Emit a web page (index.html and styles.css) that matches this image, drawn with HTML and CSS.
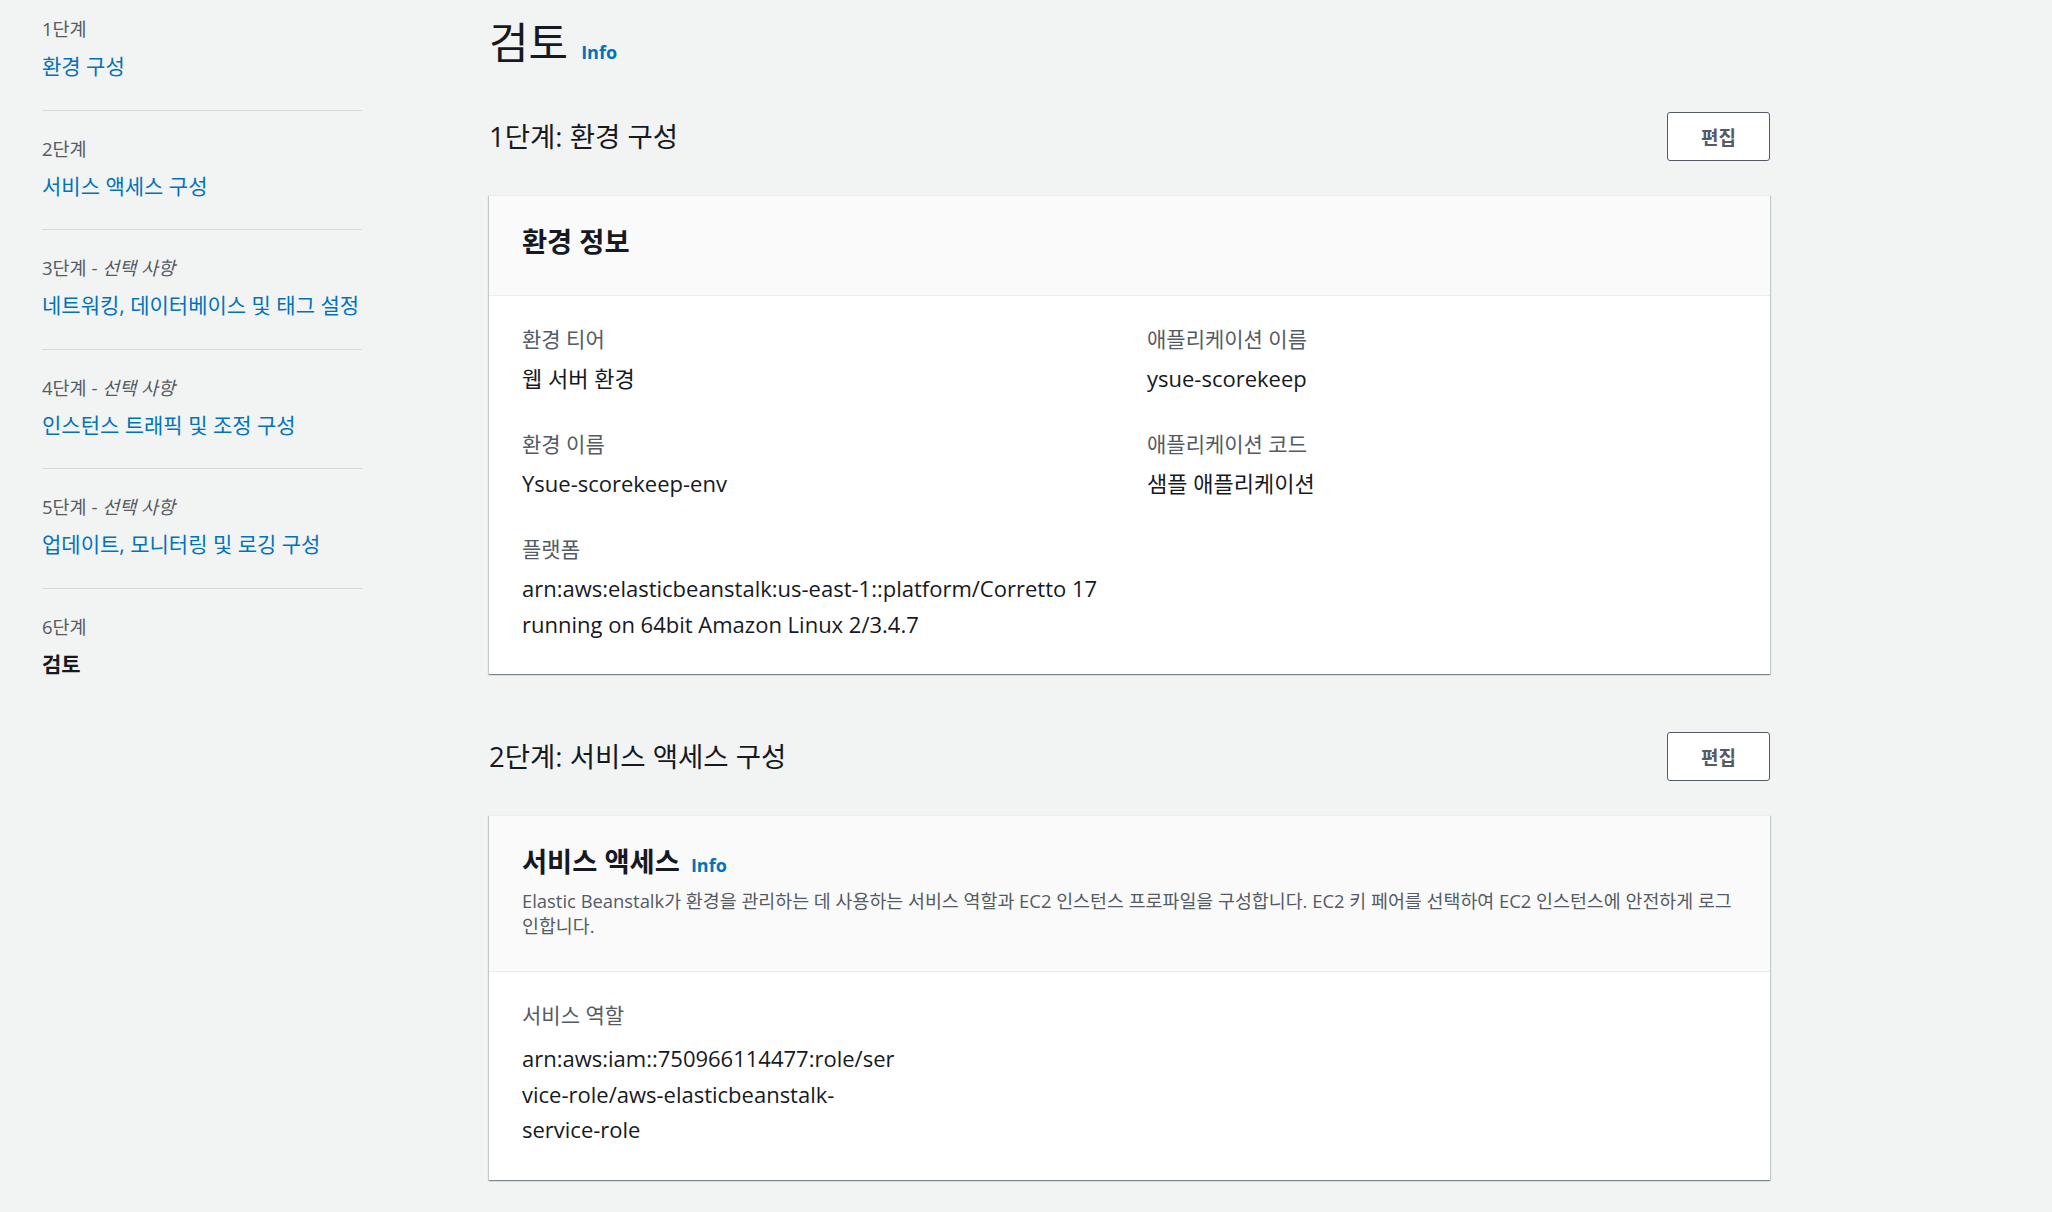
FILE: index.html
```html
<!DOCTYPE html>
<html lang="ko">
<head>
    <meta charset="UTF-8">
    <meta name="viewport" content="width=device-width, initial-scale=1.0">
    <title>검토 - Elastic Beanstalk</title>
    <link rel="stylesheet" href="styles.css">
</head>
<body>
    <div class="layout">
        <!-- Wizard steps -->
        <nav class="steps">
            <ol>
                <li>
                    <span class="step-num">1단계</span>
                    <a href="#" class="step-link">환경 구성</a>
                </li>
                <li>
                    <span class="step-num">2단계</span>
                    <a href="#" class="step-link">서비스 액세스 구성</a>
                </li>
                <li>
                    <span class="step-num">3단계 - <i>선택 사항</i></span>
                    <a href="#" class="step-link">네트워킹, 데이터베이스 및 태그 설정</a>
                </li>
                <li>
                    <span class="step-num">4단계 - <i>선택 사항</i></span>
                    <a href="#" class="step-link">인스턴스 트래픽 및 조정 구성</a>
                </li>
                <li>
                    <span class="step-num">5단계 - <i>선택 사항</i></span>
                    <a href="#" class="step-link">업데이트, 모니터링 및 로깅 구성</a>
                </li>
                <li>
                    <span class="step-num">6단계</span>
                    <span class="step-current">검토</span>
                </li>
            </ol>
        </nav>

        <!-- Review -->
        <main class="main-content">
            <div class="page-title">
                <h1>검토</h1>
                <a href="#" class="info-link">Info</a>
            </div>

            <section class="review-section">
                <div class="section-header">
                    <h2>1단계: 환경 구성</h2>
                    <button class="edit-button">편집</button>
                </div>
                <div class="card">
                    <div class="card-header">
                        <h3>환경 정보</h3>
                    </div>
                    <div class="card-body two-cols">
                        <div class="col">
                            <div class="field">
                                <div class="field-label">환경 티어</div>
                                <div class="field-value">웹 서버 환경</div>
                            </div>
                            <div class="field">
                                <div class="field-label">환경 이름</div>
                                <div class="field-value">Ysue-scorekeep-env</div>
                            </div>
                            <div class="field">
                                <div class="field-label">플랫폼</div>
                                <div class="field-value">arn:aws:elasticbeanstalk:us-east-1::platform/Corretto 17 running on 64bit Amazon Linux 2/3.4.7</div>
                            </div>
                        </div>
                        <div class="col">
                            <div class="field">
                                <div class="field-label">애플리케이션 이름</div>
                                <div class="field-value">ysue-scorekeep</div>
                            </div>
                            <div class="field">
                                <div class="field-label">애플리케이션 코드</div>
                                <div class="field-value">샘플 애플리케이션</div>
                            </div>
                        </div>
                    </div>
                </div>
            </section>

            <section class="review-section">
                <div class="section-header">
                    <h2>2단계: 서비스 액세스 구성</h2>
                    <button class="edit-button">편집</button>
                </div>
                <div class="card">
                    <div class="card-header with-desc">
                        <h3>서비스 액세스 <a href="#" class="info-link">Info</a></h3>
                        <p class="card-desc">Elastic Beanstalk가 환경을 관리하는 데 사용하는 서비스 역할과 EC2 인스턴스 프로파일을 구성합니다. EC2 키 페어를 선택하여 EC2 인스턴스에 안전하게 로그인합니다.</p>
                    </div>
                    <div class="card-body three-cols">
                        <div class="field">
                            <div class="field-label">서비스 역할</div>
                            <div class="field-value role">arn:aws:iam::750966114477:role/service-role/aws-elasticbeanstalk-service-role</div>
                        </div>
                    </div>
                </div>
            </section>
        </main>
    </div>
</body>
</html>
```

FILE: styles.css
```css
/* Global */
body {
    margin: 0;
    padding: 0;
    background-color: #f2f3f3;
    color: #16191f;
    font-family: "Open Sans", "Noto Sans CJK KR", sans-serif;
}

.layout {
    display: flex;
    align-items: flex-start;
}

/* Steps sidebar */
.steps {
    width: 320px;
    margin-left: 42px;
    white-space: nowrap;
}

.steps ol {
    list-style: none;
    margin: 0;
    padding: 0;
}

.steps li {
    display: flex;
    flex-direction: column;
    gap: 10px;
    padding: 26px 0 28.5px;
    border-top: 1px solid #d5dbdb;
}

.steps li:first-child {
    padding-top: 17px;
    border-top: none;
}

.step-num {
    font-size: 18.5px;
    line-height: 24px;
    color: #545b64;
}

.step-num i {
    font-style: italic;
}

.step-link {
    font-size: 21px;
    line-height: 30px;
    color: #0073bb;
    text-decoration: none;
}

.step-current {
    font-size: 21px;
    line-height: 30px;
    font-weight: bold;
    color: #16191f;
}

/* Main */
.main-content {
    width: 1281px;
    margin-left: 127px;
    padding-top: 18px;
}

.page-title {
    display: flex;
    align-items: baseline;
    gap: 13px;
    margin-bottom: 44px;
}

.page-title h1 {
    margin: 0;
    font-size: 43px;
    line-height: 50px;
    font-weight: normal;
}

.info-link {
    font-size: 18px;
    font-weight: bold;
    color: #0073bb;
    text-decoration: none;
}

.review-section {
    margin-bottom: 58px;
}

.section-header {
    display: flex;
    justify-content: space-between;
    align-items: center;
    margin-bottom: 34px;
}

.section-header h2 {
    margin: 0;
    font-size: 27.5px;
    line-height: 36px;
    font-weight: normal;
}

.edit-button {
    height: 49px;
    padding: 0 33px;
    background: #fff;
    border: 1px solid #545b64;
    border-radius: 3px;
    color: #545b64;
    font-family: inherit;
    font-size: 19px;
    font-weight: bold;
    cursor: pointer;
}

/* Card */
.card {
    background: #fff;
    border-top: 1px solid #eaeded;
    box-shadow: 0 1px 1px 0 rgba(0, 28, 36, 0.3),
                1px 1px 1px 0 rgba(0, 28, 36, 0.15),
                -1px 1px 1px 0 rgba(0, 28, 36, 0.15);
}

.card-header {
    background: #fafafa;
    padding: 29px 33px 36px;
    border-bottom: 1px solid #eaeded;
}

.card-header.with-desc {
    padding-bottom: 33px;
}

.card-header h3 {
    margin: 0;
    font-size: 27.3px;
    line-height: 34px;
    font-weight: bold;
}

.card-header h3 .info-link {
    margin-left: 4px;
}

.card-desc {
    margin: 6px 0 0;
    font-size: 18.4px;
    line-height: 25px;
    color: #545b64;
}

.card-body {
    display: grid;
    padding: 29px 33px 32px;
}

.two-cols {
    grid-template-columns: repeat(2, minmax(0, 1fr));
    column-gap: 35px;
}

.three-cols {
    grid-template-columns: repeat(3, minmax(0, 1fr));
    column-gap: 40px;
}

.col {
    display: flex;
    flex-direction: column;
    gap: 34px;
}

.field-label {
    font-size: 21px;
    line-height: 28px;
    color: #545b64;
}

.field-value {
    margin-top: 7px;
    font-size: 22px;
    line-height: 36px;
    overflow-wrap: break-word;
}

.field-value.role {
    margin-top: 12px;
    line-height: 35.5px;
}
```
